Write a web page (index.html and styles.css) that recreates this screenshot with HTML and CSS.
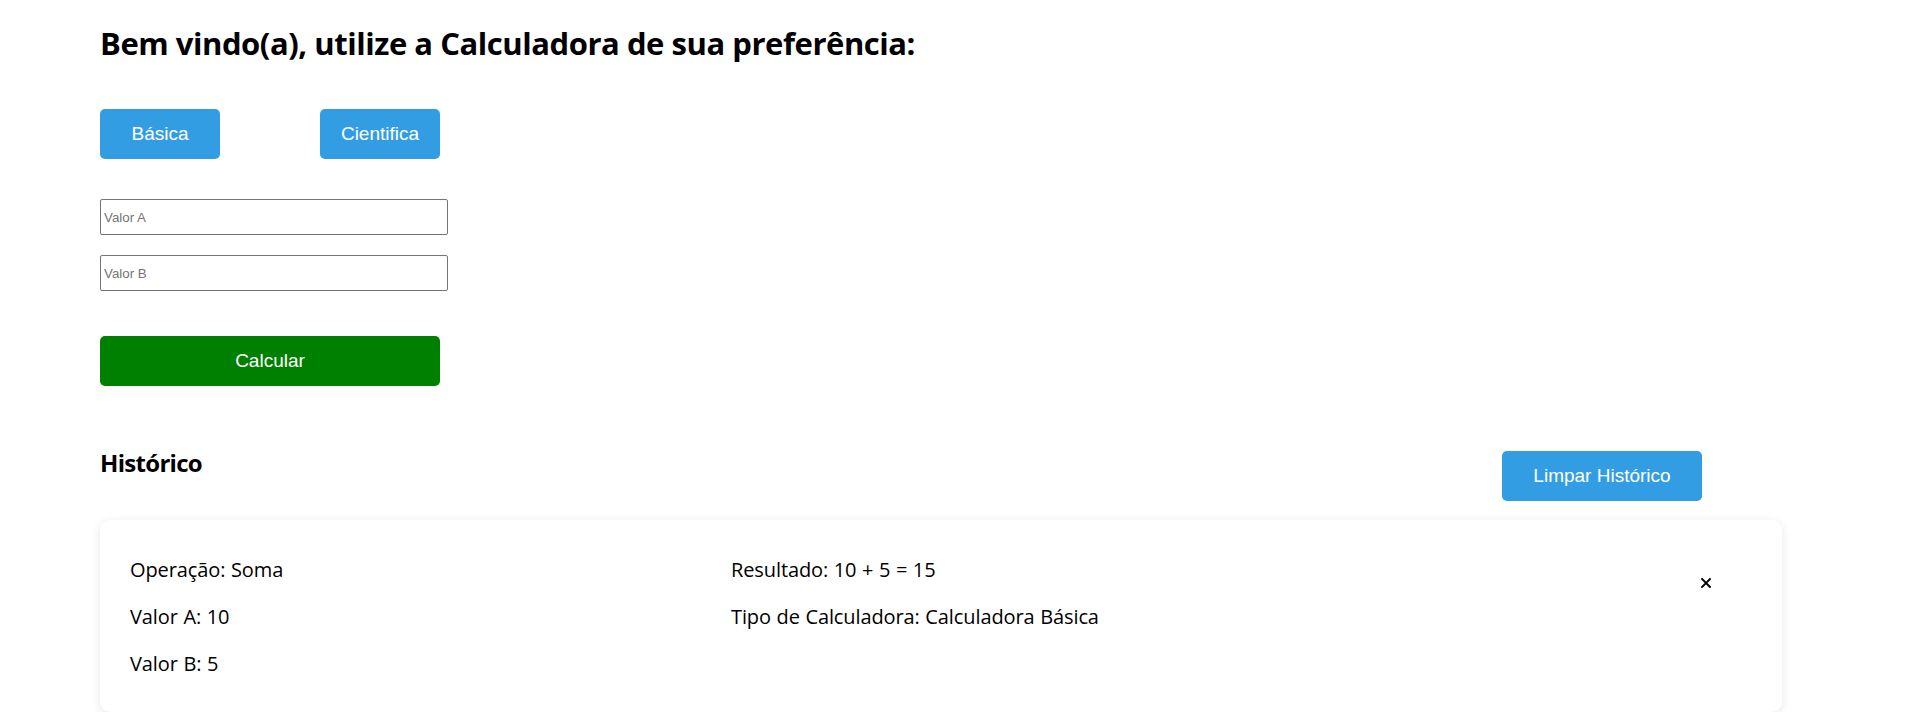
FILE: index.html
```html
<!DOCTYPE html>
<html lang="pt-BR">
<head>
<meta charset="utf-8">
<title>Calculadora</title>
<link rel="stylesheet" href="styles.css">
</head>
<body>
<main class="page">
  <h1 class="title">Bem vindo(a), utilize a Calculadora de sua preferência:</h1>
  <div class="tabs">
    <button class="btn btn-blue tab" type="button">Básica</button>
    <button class="btn btn-blue tab" type="button">Cientifica</button>
  </div>
  <form class="calc">
    <input class="field" type="text" placeholder="Valor A">
    <input class="field field-b" type="text" placeholder="Valor B">
    <button class="btn btn-green calc-btn" type="button">Calcular</button>
  </form>
  <section class="history">
    <div class="history-head">
      <h2 class="history-title">Histórico</h2>
      <button class="btn btn-blue clear" type="button">Limpar Histórico</button>
    </div>
    <div class="card">
      <div class="col col-left">
        <p>Operação: Soma</p>
        <p>Valor A: 10</p>
        <p>Valor B: 5</p>
      </div>
      <div class="col col-right">
        <p>Resultado: 10 + 5 = 15</p>
        <p>Tipo de Calculadora: Calculadora Básica</p>
      </div>
      <button class="remove" type="button" aria-label="Remover">
        <svg width="10" height="10" viewBox="0 0 10 10"><path d="M1 1L9 9M9 1L1 9" stroke="#000" stroke-width="1.9" stroke-linecap="square"/></svg>
      </button>
    </div>
  </section>
</main>
</body>
</html>
```

FILE: styles.css
```css
html, body {
  margin: 0;
  padding: 0;
  background: #ffffff;
}

body {
  font-family: "Open Sans", "Noto Sans", sans-serif;
  color: #000;
}

.page {
  width: 1682px;
  padding: 23px 0 0 100px;
}

.title {
  margin: 0;
  font-size: 31px;
  line-height: 40px;
  font-weight: 700;
  letter-spacing: -0.45px;
}

.tabs {
  display: flex;
  gap: 100px;
  margin-top: 46px;
}

.btn {
  border: none;
  border-radius: 5px;
  color: #fff;
  font-family: "Liberation Sans", Arial, sans-serif;
  font-size: 19px;
  height: 50px;
  padding: 0;
  cursor: pointer;
}

.btn-blue {
  background: #339de3;
}

.btn-green {
  background: #008000;
}

.tab {
  width: 120px;
}

.calc {
  display: flex;
  flex-direction: column;
  align-items: flex-start;
  margin-top: 40px;
}

.field {
  width: 348px;
  height: 36px;
  box-sizing: border-box;
  border: 1px solid #767676;
  border-radius: 2px;
  padding: 0 3px;
  font-family: "Liberation Sans", Arial, sans-serif;
  font-size: 13.333px;
  margin: 0;
}

.field::placeholder {
  color: #757575;
}

.field-b {
  margin-top: 20px;
}

.calc-btn {
  width: 340px;
  margin-top: 45px;
}

.history {
  margin-top: 65px;
}

.history-head {
  display: flex;
  justify-content: space-between;
  align-items: flex-start;
  padding-right: 80px;
}

.history-title {
  margin: 0;
  font-size: 24px;
  line-height: 24px;
  font-weight: 700;
  letter-spacing: -0.7px;
}

.clear {
  width: 200px;
}

.card {
  margin-top: 19px;
  display: grid;
  grid-template-columns: 601px 1fr auto;
  align-items: start;
  padding: 16px 30px 15px 30px;
  border-radius: 10px;
  background: #fff;
  box-shadow: 0 2px 10px rgba(0, 0, 0, 0.1);
}

.col p {
  margin: 20px 0;
  font-size: 20px;
  line-height: 27px;
  letter-spacing: -0.1px;
  word-spacing: 0.5px;
}

.remove {
  display: block;
  margin: 42px 41px 0 0;
  padding: 0;
  border: none;
  background: transparent;
  width: 10px;
  height: 10px;
  line-height: 0;
  cursor: pointer;
}
```
